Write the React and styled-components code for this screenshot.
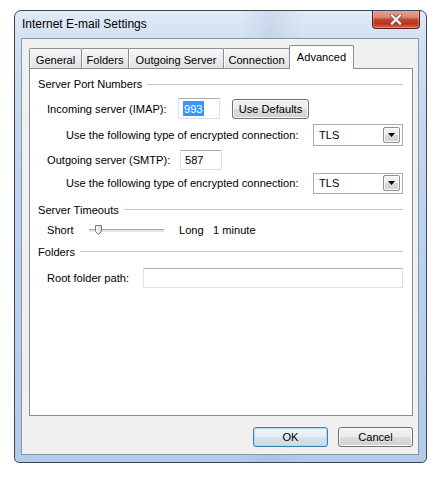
import React from 'react';
import styled, { createGlobalStyle } from 'styled-components';

const GlobalStyle = createGlobalStyle`
  html, body {
    margin: 0;
    padding: 0;
    background: #fff;
  }
  body {
    font-family: "Liberation Sans", Arial, sans-serif;
    font-size: 11.1px;
    color: #000;
  }
`;

const Page = styled.div`
  padding: 10px 0 0 14px;
`;

const Window = styled.div`
  width: 413px;
  height: 453px;
  box-sizing: border-box;
  border: 1px solid #3d4652;
  border-radius: 7px 7px 5px 5px;
  background:
    linear-gradient(90deg, rgba(255, 255, 255, 0) 55%, rgba(150, 175, 205, 0.25) 62%, rgba(255, 255, 255, 0) 70%),
    linear-gradient(180deg, #e1eaf6 0px, #d3e1f2 27px, #c2d7ef 120px, #b0cbeb 100%);
  display: flex;
  flex-direction: column;
  overflow: hidden;
`;

const TitleBar = styled.div`
  height: 27px;
  flex: none;
  display: flex;
  align-items: flex-start;
  justify-content: space-between;
  padding-left: 7px;
`;

const Title = styled.span`
  font-size: 12px;
  line-height: 27px;
  color: #000;
`;

const CloseButton = styled.div`
  width: 48px;
  height: 19px;
  margin: -1px 6px 0 0;
  box-sizing: border-box;
  border: 1px solid #5b1c12;
  border-top: none;
  border-radius: 0 0 4px 4px;
  background: linear-gradient(180deg, #e9a796 0%, #d98772 40%, #c24a33 52%, #b8321d 75%, #d7684f 100%);
  box-shadow: inset 0 0 0 1px rgba(255, 210, 200, 0.35);
  display: flex;
  align-items: center;
  justify-content: center;
`;

const Client = styled.div`
  margin: 0 7px 7px 6px;
  height: 417px;
  box-sizing: border-box;
  border: 1px solid #8596ab;
  background: #f0f0f0;
  padding: 6px 5px 7px 7px;
  display: flex;
  flex-direction: column;
`;

const TabStrip = styled.div`
  height: 23px;
  flex: none;
  display: flex;
  align-items: flex-end;
  position: relative;
  z-index: 1;
`;

const Tab = styled.div`
  width: ${(p) => p.$w}px;
  height: ${(p) => (p.$active ? 24 : 20)}px;
  margin-left: ${(p) => (p.$first ? 0 : -1)}px;
  margin-bottom: ${(p) => (p.$active ? -1 : 0)}px;
  box-sizing: border-box;
  border: 1px solid #898c95;
  border-bottom: none;
  border-radius: 2px 2px 0 0;
  background: ${(p) => (p.$active ? '#fff' : 'linear-gradient(180deg, #f6f6f6 0%, #ececec 50%, #e2e2e2 100%)')};
  box-shadow: ${(p) => (p.$active ? 'none' : 'inset 1px 1px 0 #fdfdfd')};
  display: flex;
  justify-content: center;
  padding-top: ${(p) => (p.$active ? 4 : 4)}px;
  line-height: 14px;
  white-space: nowrap;
  position: relative;
  z-index: ${(p) => (p.$active ? 2 : 1)};
`;

const Panel = styled.div`
  height: 348px;
  flex: none;
  box-sizing: border-box;
  border: 1px solid #898c95;
  background: #fff;
  padding: 3px 9px 0 8px;
  display: flex;
  flex-direction: column;
`;

const GroupHeading = styled.div`
  height: ${(p) => p.$h}px;
  flex: none;
  display: flex;
  align-items: center;
  gap: 5px;
  white-space: nowrap;

  &::after {
    content: '';
    flex: 1;
    height: 1px;
    background: #c6c9cc;
  }
`;

const Row = styled.div`
  height: ${(p) => p.$h}px;
  flex: none;
  display: flex;
  align-items: center;
  padding-left: ${(p) => p.$indent}px;
  white-space: nowrap;
`;

const Label = styled.span`
  flex: none;
  width: ${(p) => (p.$w ? `${p.$w}px` : 'auto')};
  margin-left: ${(p) => p.$gap || 0}px;
`;

const TextBox = styled.div`
  flex: ${(p) => (p.$w ? 'none' : '1')};
  width: ${(p) => (p.$w ? `${p.$w}px` : 'auto')};
  height: ${(p) => p.$h || 20}px;
  box-sizing: border-box;
  border: 1px solid #dbdfe6;
  border-top-color: #abadb3;
  border-left-color: #e2e3ea;
  background: #fff;
  padding-left: 4px;
  display: flex;
  align-items: center;
`;

const Selected = styled.span`
  background: #3399ff;
  color: #fff;
  padding: 2px 1px 1px;
`;

const ComboBox = styled.div`
  margin-left: auto;
  width: 90px;
  height: ${(p) => p.$h}px;
  box-sizing: border-box;
  border: 1px solid #a9acb2;
  background: #fff;
  display: flex;
  align-items: center;
  justify-content: space-between;
  padding: 0 2px 0 5px;
`;

const DropButton = styled.div`
  width: 17px;
  height: 16px;
  box-sizing: border-box;
  border: 1px solid #8d8f94;
  border-radius: 2px;
  background: linear-gradient(180deg, #f4f4f4 0%, #e9e9e9 50%, #d9d9d9 51%, #cfcfcf 100%);
  box-shadow: inset 0 0 0 1px #fafafa;
  display: flex;
  align-items: center;
  justify-content: center;
`;

const Button = styled.button`
  font: inherit;
  color: #000;
  flex: none;
  width: ${(p) => p.$w}px;
  height: 20px;
  margin-left: ${(p) => p.$gap || 0}px;
  box-sizing: border-box;
  padding: 0;
  border: 1px solid ${(p) => (p.$default ? '#3c7fb1' : '#707070')};
  border-radius: 3px;
  background: ${(p) =>
    p.$default
      ? 'linear-gradient(180deg, #eef4f8 0%, #e6eef4 50%, #d7e3ec 51%, #cbdae5 100%)'
      : 'linear-gradient(180deg, #f2f2f2 0%, #ebebeb 50%, #dddddd 51%, #cfcfcf 100%)'};
  box-shadow: inset 0 0 0 1px ${(p) => (p.$default ? '#a9dcf5' : '#fbfbfb')};
`;

const Track = styled.div`
  flex: none;
  position: relative;
  width: 75px;
  height: 3px;
  box-sizing: border-box;
  border-top: 1px solid #a8a8a8;
  background: #e4e6e8;
`;

const Thumb = styled.svg`
  position: absolute;
  left: 6px;
  top: -5px;
`;

const Footer = styled.div`
  margin-top: 11px;
  display: flex;
  justify-content: flex-end;
  gap: 10px;
`;

const tabs = [
  { label: 'General', w: 53 },
  { label: 'Folders', w: 48 },
  { label: 'Outgoing Server', w: 96 },
  { label: 'Connection', w: 67 },
  { label: 'Advanced', w: 65, active: true },
];

function Combo({ value, h }) {
  return (
    <ComboBox $h={h}>
      <span>{value}</span>
      <DropButton>
        <svg width="7" height="4" viewBox="0 0 7 4">
          <path d="M0 0 H7 L3.5 4 Z" fill="#000" />
        </svg>
      </DropButton>
    </ComboBox>
  );
}

export default function App() {
  return (
    <Page>
      <GlobalStyle />
      <Window>
        <TitleBar>
          <Title>Internet E-mail Settings</Title>
          <CloseButton>
            <svg width="12" height="11" viewBox="0 0 12 11">
              <path d="M2 1.5 L10 9.5 M10 1.5 L2 9.5" stroke="#7a5550" strokeWidth="4" strokeLinecap="square" />
              <path d="M2 1.5 L10 9.5 M10 1.5 L2 9.5" stroke="#f4f4f4" strokeWidth="2.2" strokeLinecap="square" />
            </svg>
          </CloseButton>
        </TitleBar>

        <Client>
          <TabStrip>
            {tabs.map((t, i) => (
              <Tab key={t.label} $w={t.w} $active={t.active} $first={i === 0}>
                {t.label}
              </Tab>
            ))}
          </TabStrip>

          <Panel>
            <GroupHeading $h={24}>Server Port Numbers</GroupHeading>
            <Row $h={25} $indent={9}>
              <Label $w={131}>Incoming server (IMAP):</Label>
              <TextBox $w={42} $h={21}>
                <Selected>993</Selected>
              </TextBox>
              <Button $w={77} $gap={12}>Use Defaults</Button>
            </Row>
            <Row $h={27} $indent={28}>
              <Label>Use the following type of encrypted connection:</Label>
              <Combo value="TLS" h={22} />
            </Row>
            <Row $h={24} $indent={9}>
              <Label $w={133}>Outgoing server (SMTP):</Label>
              <TextBox $w={42}>587</TextBox>
            </Row>
            <Row $h={22} $indent={28}>
              <Label>Use the following type of encrypted connection:</Label>
              <Combo value="TLS" h={21} />
            </Row>

            <GroupHeading $h={31}>Server Timeouts</GroupHeading>
            <Row $h={10} $indent={9}>
              <Label $w={42}>Short</Label>
              <Track>
                <Thumb width="7" height="10" viewBox="0 0 7 10">
                  <defs>
                    <linearGradient id="thumbFill" x1="0" y1="0" x2="1" y2="0">
                      <stop offset="0" stopColor="#ffffff" />
                      <stop offset="1" stopColor="#d4d4d4" />
                    </linearGradient>
                  </defs>
                  <path d="M0.5 0.5 H6.5 V6.5 L3.5 9.5 L0.5 6.5 Z" fill="url(#thumbFill)" stroke="#7c7c7c" />
                </Thumb>
              </Track>
              <Label $w={34} $gap={15}>Long</Label>
              <Label>1 minute</Label>
            </Row>

            <GroupHeading $h={33}>Folders</GroupHeading>
            <Row $h={19} $indent={9}>
              <Label $w={96}>Root folder path:</Label>
              <TextBox />
            </Row>
          </Panel>

          <Footer>
            <Button $w={75} $default>OK</Button>
            <Button $w={75}>Cancel</Button>
          </Footer>
        </Client>
      </Window>
    </Page>
  );
}
